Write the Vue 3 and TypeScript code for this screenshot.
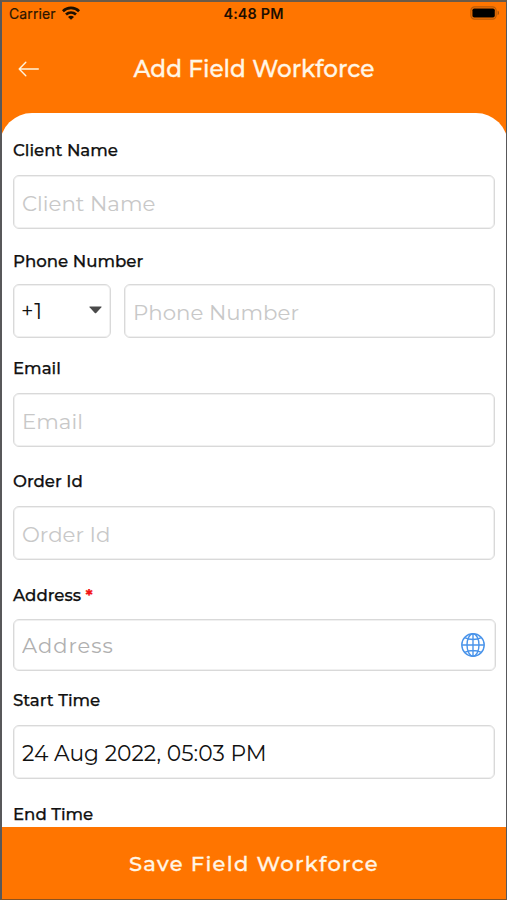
<script setup lang="ts">
import { ref } from 'vue'

interface Field {
  id: string
  label: string
  placeholder: string
}

const contactFields: Field[] = [
  { id: 'email', label: 'Email', placeholder: 'Email' },
  { id: 'order', label: 'Order Id', placeholder: 'Order Id' },
]

const values = ref<Record<string, string>>({ client: '', phone: '', email: '', order: '', address: '' })
const dialCode = ref('+1')
const startTime = ref('24 Aug 2022, 05:03 PM')
</script>

<template>
  <div class="screen">
    <div class="status">
      <div class="carrier">
        <span>Carrier</span>
        <svg class="wifi" width="18" height="14" viewBox="0 0 18 14" fill="none" stroke="#1d1000" stroke-width="2.7">
          <path d="M.9 5.2C5.3.8 12.7.8 17.1 5.2" />
          <path d="M4 8.600c2.900-2.700 7.100-2.700 10 0" />
          <path d="M9 13.700 6 10.900c1.700-1.500 4.300-1.500 6 0z" fill="#1d1000" stroke="none" />
        </svg>
      </div>
      <span class="clock">4:48 PM</span>
      <svg class="battery" width="30" height="14" viewBox="0 0 30 14">
        <rect x="0.9" y="0.9" width="25.2" height="12.2" rx="3.6" fill="none" stroke="#b85a08" stroke-width="1.2" />
        <rect x="2.4" y="2.5" width="22.4" height="9" rx="1.8" fill="#000" />
        <path d="M27.600 4.800c1.900.6 1.900 3.800 0 4.400z" fill="#a85208" />
      </svg>
    </div>

    <header class="header">
      <button class="back" aria-label="Back">
        <svg width="22" height="16" viewBox="0 0 22 16" fill="none" stroke="#fff3dc" stroke-width="1.4" stroke-linecap="round" stroke-linejoin="round">
          <path d="M20.300 8H1.200M7.800 1.200 1.200 8l6.600 6.800" />
        </svg>
      </button>
      <h1>Add Field Workforce</h1>
    </header>

    <main class="sheet">
      <section class="field client">
        <label for="client">Client Name</label>
        <input id="client" v-model="values.client" class="box" placeholder="Client Name" />
      </section>

      <section class="field phone">
        <label for="phone">Phone Number</label>
        <div class="row">
          <button class="box dial">
            <span>{{ dialCode }}</span>
            <svg width="13" height="8" viewBox="0 0 13 8"><path d="M.8.500h11.400q.8 0 .2.700L7.200 6.900q-.7.700-1.400 0L.6 1.200Q0 .5.800.5z" fill="#4a4a4a" /></svg>
          </button>
          <input id="phone" v-model="values.phone" class="box" placeholder="Phone Number" />
        </div>
      </section>

      <section v-for="f in contactFields" :key="f.id" class="field" :class="f.id">
        <label :for="f.id">{{ f.label }}</label>
        <input :id="f.id" v-model="values[f.id]" class="box" :placeholder="f.placeholder" />
      </section>

      <section class="field address">
        <label for="address">Address <span class="required">*</span></label>
        <div class="box lookup">
          <input id="address" v-model="values.address" placeholder="Address" />
          <svg width="24" height="24" viewBox="0 0 24 24" fill="none" stroke="#4a94ea" stroke-width="1.400">
            <circle cx="12" cy="12" r="11.200" />
            <ellipse cx="12" cy="12" rx="6" ry="11.200" />
            <path d="M12 .8v22.400M.8 12h22.400M3.600 4.600c4.900 2.500 11.900 2.500 16.800 0M3.600 19.400c4.900-2.500 11.900-2.500 16.800 0" />
          </svg>
        </div>
      </section>

      <section class="field start">
        <label for="start">Start Time</label>
        <input id="start" v-model="startTime" class="box" readonly />
      </section>

      <section class="field end">
        <label>End Time</label>
      </section>
    </main>

    <button class="save">Save Field Workforce</button>
  </div>
</template>

<style>
body {
  margin: 0;
}
</style>

<style scoped>
.screen {
  box-sizing: border-box;
  width: 507px;
  height: 900px;
  display: flex;
  flex-direction: column;
  overflow: hidden;
  background: #ff7500;
  border: 2px solid #58585a;
  border-right-width: 1px;
  border-bottom: 1px solid #8a5220;
  border-top-color: #6b5a48;
  font-family: Montserrat, Inter, sans-serif;
}

.screen * {
  box-sizing: border-box;
}

button,
input {
  font: inherit;
  color: inherit;
  border: 0;
  padding: 0;
  margin: 0;
  background: none;
  outline: none;
}

.status {
  height: 24px;
  flex: none;
  display: grid;
  grid-template-columns: 1fr auto 1fr;
  align-items: center;
  padding: 0 6px 0 7px;
  font-family: Inter, sans-serif;
  font-size: 14px;
  color: #2a1500;
}

.status span {
  margin-top: -2px;
}

.carrier {
  display: flex;
  align-items: center;
  gap: 6px;
  letter-spacing: 0.1px;
  -webkit-text-stroke: 0.2px currentColor;
}

.wifi {
  margin-top: -3px;
}

.clock {
  font-weight: 600;
  font-size: 14.4px;
  letter-spacing: 0.15px;
  color: #1d0e00;
  position: relative;
  left: -1px;
}

.battery {
  justify-self: end;
  margin-top: -2px;
}

.header {
  height: 87px;
  flex: none;
  display: grid;
  grid-template-columns: 60px 1fr 60px;
  align-items: center;
  padding-bottom: 2px;
  color: #fff6e6;
}

.back {
  height: 16px;
  padding-left: 16px;
  display: flex;
}

h1 {
  margin: 0;
  text-align: center;
  font-size: 23.200px;
  line-height: 28px;
  font-weight: 500;
  white-space: nowrap;
  -webkit-text-stroke: 0.3px currentColor;
}

.sheet {
  flex: 1;
  min-height: 0;
  overflow: hidden;
  margin: 0 -2px;
  padding: 27px 13px 0;
  border-radius: 32px 32px 0 0;
  background: #fff;
}

.field {
  display: flex;
  flex-direction: column;
  color: #111;
}

.field label {
  font-size: 16.600px;
  line-height: 21px;
  font-weight: 500;
  -webkit-text-stroke: 0.25px currentColor;
}

.box {
  width: 482px;
  height: 54px;
  border: 1px solid #d9d9d9;
  box-shadow: inset 0 0 0 1px #f0f0f0;
  border-radius: 6px;
  padding: 2px 8px 0;
  background: #fff;
  font-size: 21.800px;
}

input::placeholder {
  color: #c8c8c8;
  opacity: 1;
  font-size: 21.300px;
  font-weight: 400;
}

.client {
  height: 111px;
  gap: 14px;
}

.phone {
  height: 107px;
  gap: 12px;
}

.email {
  height: 113px;
  gap: 14px;
}

.order {
  height: 114px;
  gap: 14px;
}

.address {
  height: 105px;
  gap: 13px;
}

.start {
  height: 114px;
  gap: 14px;
}

.row {
  display: flex;
  gap: 13px;
  width: 482px;
}

.dial {
  width: 98px;
  flex: none;
  display: flex;
  align-items: center;
  justify-content: space-between;
  padding: 0 8px 0 7px;
  letter-spacing: 1px;
}

.dial svg {
  margin-top: -2px;
}

.row input {
  flex: 1;
  min-width: 0;
}

.required {
  color: #f31515;
  font-weight: 700;
}

.lookup {
  width: 483px;
  height: 52px;
  display: flex;
  align-items: center;
  justify-content: space-between;
  padding: 0 10px 0 8px;
}

.lookup input {
  flex: 1;
  min-width: 0;
}

.lookup input::placeholder {
  letter-spacing: 1px;
  font-size: 21px;
  color: #b0b0b0;
}

.save {
  height: 72px;
  flex: none;
  color: #fff6e6;
  font-size: 21px;
  font-weight: 500;
  letter-spacing: 1.300px;
  -webkit-text-stroke: 0.3px currentColor;
}
</style>
